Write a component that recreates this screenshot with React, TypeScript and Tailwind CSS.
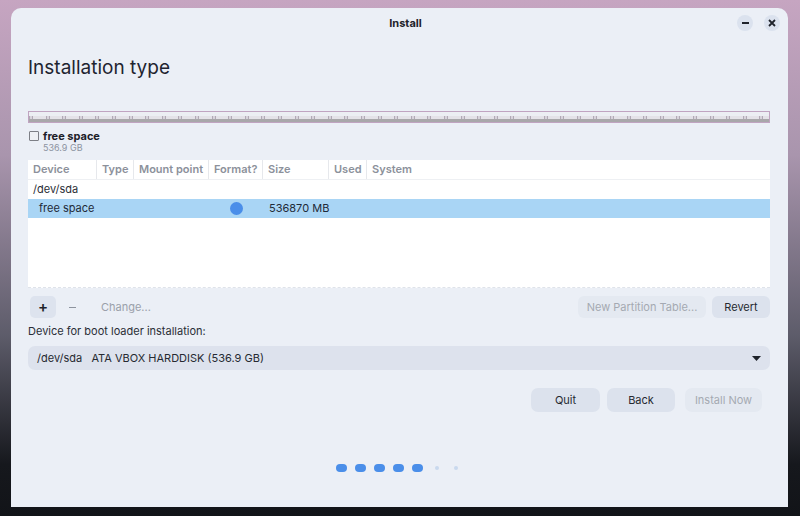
import React from "react";

const cols = [
  { label: "Device", w: "w-[69px]" },
  { label: "Type", w: "w-[37px]" },
  { label: "Mount point", w: "w-[75px]" },
  { label: "Format?", w: "w-[54px]" },
  { label: "Size", w: "w-[66px]" },
  { label: "Used", w: "w-[38px]" },
  { label: "System", w: "flex-1" },
];

export default function App() {
  return (
    <div
      className="w-[800px] h-[516px] overflow-hidden pt-[8px] pl-[11px] bg-[linear-gradient(180deg,#c6a5c1_0%,#a995ad_30%,#5d5c6a_65%,#16181d_90%,#121418_100%)]"
      style={{ fontFamily: "Inter, 'Noto Sans', sans-serif" }}
    >
      <div className="w-[777px] h-[499px] rounded-t-[10px] bg-[#ebeff6] flex flex-col">
        {/* title bar */}
        <div className="h-[30px] flex items-center">
          <div className="w-[80px]" />
          <div className="flex-1 text-center text-[11px] font-bold text-[#1f232b] pl-[12px]">Install</div>
          <div className="w-[80px] flex items-center justify-end gap-[11px] pr-[8px]">
            <div className="w-[16px] h-[16px] rounded-full bg-[#dbe2ee] flex items-center justify-center">
              <div className="w-[7px] h-[2px] bg-[#1f232b]" />
            </div>
            <div className="w-[16px] h-[16px] rounded-full bg-[#dbe2ee] flex items-center justify-center">
              <svg width="8" height="8" viewBox="0 0 8 8">
                <path d="M1 1L7 7M7 1L1 7" stroke="#1f232b" strokeWidth="1.8" />
              </svg>
            </div>
          </div>
        </div>

        <div className="pl-[17px] pr-[18px] flex flex-col">
          <div className="mt-[18px] h-[24px] text-[19px] leading-[24px] text-[#1e2430]">Installation type</div>

          {/* partition bar */}
          <div className="mt-[31px] h-[12px] border border-[#c0a4c1] flex flex-col bg-[#eceef3]">
            <div className="h-[4px]" />
            <div className="h-[3px] bg-[repeating-linear-gradient(90deg,#b2a9b6_0px,#b2a9b6_1px,#d8d4dc_1px,#d8d4dc_3px,#b2a9b6_3px,#b2a9b6_4px,#e4e2e8_4px,#e4e2e8_16.6px)]" />
            <div className="flex-1 bg-[#a8a7aa]" />
          </div>

          {/* legend */}
          <div className="mt-[7px] flex flex-col">
            <div className="h-[12px] flex items-center">
              <div className="ml-[1px] w-[10px] h-[10px] border border-[#7d7f86] rounded-[1px] bg-[#eef0f4]" />
              <span className="ml-[4px] text-[11px] leading-[12px] font-bold text-[#1c2028]">free space</span>
            </div>
            <div className="h-[12px] pl-[15px] text-[9px] leading-[12px] text-[#8b93a1]">536.9 GB</div>
          </div>

          {/* table */}
          <div className="mt-[6px] h-[128px] bg-white border-b border-dashed border-[#dfe3ea] flex flex-col">
            <div className="h-[20px] flex border-b border-[#eef0f3]">
              {cols.map((c, i) => (
                <div
                  key={c.label}
                  className={`${c.w} h-full flex items-center pl-[5px] text-[11px] font-semibold text-[#8c919b] ${i < cols.length - 1 ? "border-r border-[#e6e8ec]" : ""}`}
                >
                  {c.label}
                </div>
              ))}
            </div>
            <div className="h-[19px] flex items-center pl-[5px] text-[11px] text-[#2a2e36]">/dev/sda</div>
            <div className="h-[19px] flex items-center bg-[#a9d5f5] text-[11px] text-[#1f2a38]">
              <div className="w-[181px] pl-[11px]">free space</div>
              <div className="w-[54px] flex justify-center">
                <div className="w-[13px] h-[13px] rounded-full bg-[#4a8ee9]" />
              </div>
              <div className="pl-[6px]">536870 MB</div>
            </div>
          </div>

          {/* partition buttons */}
          <div className="mt-[8px] h-[22px] flex items-center text-[11px]">
            <div className="ml-[2px] w-[26px] h-[22px] rounded-[5px] bg-[#dde3ee] flex items-center justify-center text-[15px] font-semibold text-[#1f232b]">+</div>
            <div className="ml-[11px] w-[10px] h-[22px] flex items-center justify-center">
              <div className="w-[7px] h-[1px] bg-[#8d939e]" />
            </div>
            <div className="ml-[24px] text-[#9aa0aa]">Change...</div>
            <div className="flex-1" />
            <div className="w-[128px] h-[22px] rounded-[6px] bg-[#e4e9f1] flex items-center justify-center text-[#a4a9b2]">New Partition Table...</div>
            <div className="ml-[6px] w-[58px] h-[22px] rounded-[6px] bg-[#dce2ed] flex items-center justify-center text-[#262a31]">Revert</div>
          </div>

          <div className="mt-[7px] h-[12px] text-[11px] leading-[12px] text-[#2a2e36]">Device for boot loader installation:</div>

          {/* combo */}
          <div className="mt-[9px] h-[24px] rounded-[7px] bg-[#dde2ed] flex items-center pl-[9px] pr-[9px] text-[11px] text-[#262a31]">
            <span className="whitespace-pre">/dev/sda   ATA VBOX HARDDISK (536.9 GB)</span>
            <div className="flex-1" />
            <svg width="9" height="5" viewBox="0 0 9 5">
              <path d="M0 0H9L4.5 5Z" fill="#1f232b" />
            </svg>
          </div>

          {/* nav buttons */}
          <div className="mt-[18px] h-[24px] flex items-center justify-end text-[11px]">
            <div className="w-[69px] h-[24px] rounded-[7px] bg-[#dce2ed] flex items-center justify-center text-[#262a31]">Quit</div>
            <div className="ml-[7px] w-[68px] h-[24px] rounded-[7px] bg-[#dce2ed] flex items-center justify-center text-[#262a31]">Back</div>
            <div className="ml-[10px] mr-[8px] w-[77px] h-[24px] rounded-[7px] bg-[#e4e9f1] flex items-center justify-center text-[#a4a9b2]">Install Now</div>
          </div>

          {/* progress dots */}
          <div className="mt-[52px] h-[8px] flex items-center justify-center pr-[4px]">
            <div className="w-[11px] h-[8px] rounded-[4px] bg-[#4a8ee9]" />
            <div className="ml-[8px] w-[11px] h-[8px] rounded-[4px] bg-[#4a8ee9]" />
            <div className="ml-[8px] w-[11px] h-[8px] rounded-[4px] bg-[#4a8ee9]" />
            <div className="ml-[8px] w-[11px] h-[8px] rounded-[4px] bg-[#4a8ee9]" />
            <div className="ml-[8px] w-[11px] h-[8px] rounded-[4px] bg-[#4a8ee9]" />
            <div className="ml-[12px] w-[4px] h-[4px] rounded-full bg-[#c9d9ee]" />
            <div className="ml-[15px] w-[4px] h-[4px] rounded-full bg-[#c9d9ee]" />
          </div>
        </div>
      </div>
    </div>
  );
}
